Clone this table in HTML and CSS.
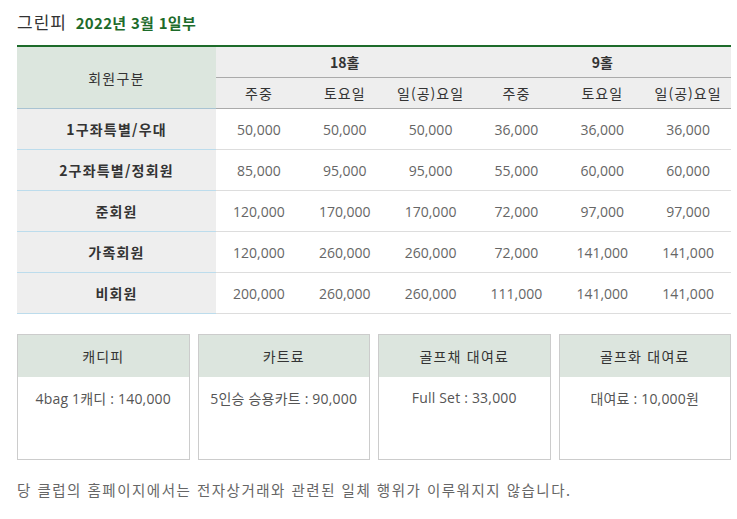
FILE: index.html
```html
<!DOCTYPE html>
<html lang="ko">
<head>
    <meta charset="UTF-8">
    <meta name="viewport" content="width=device-width, initial-scale=1.0">
    <title>그린피</title>
    <link rel="stylesheet" href="styles.css">
</head>
<body>
    <h2 class="title">그린피 <span class="since">2022년 3월 1일부</span></h2>

    <table class="fee">
        <thead>
            <tr>
                <th rowspan="2" class="kind">회원구분</th>
                <th colspan="3" class="group">18홀</th>
                <th colspan="3" class="group">9홀</th>
            </tr>
            <tr class="days">
                <th>주중</th>
                <th>토요일</th>
                <th>일(공)요일</th>
                <th>주중</th>
                <th>토요일</th>
                <th>일(공)요일</th>
            </tr>
        </thead>
        <tbody>
            <tr>
                <th>1구좌특별/우대</th>
                <td>50,000</td><td>50,000</td><td>50,000</td>
                <td>36,000</td><td>36,000</td><td>36,000</td>
            </tr>
            <tr>
                <th>2구좌특별/정회원</th>
                <td>85,000</td><td>95,000</td><td>95,000</td>
                <td>55,000</td><td>60,000</td><td>60,000</td>
            </tr>
            <tr>
                <th>준회원</th>
                <td>120,000</td><td>170,000</td><td>170,000</td>
                <td>72,000</td><td>97,000</td><td>97,000</td>
            </tr>
            <tr>
                <th>가족회원</th>
                <td>120,000</td><td>260,000</td><td>260,000</td>
                <td>72,000</td><td>141,000</td><td>141,000</td>
            </tr>
            <tr>
                <th>비회원</th>
                <td>200,000</td><td>260,000</td><td>260,000</td>
                <td>111,000</td><td>141,000</td><td>141,000</td>
            </tr>
        </tbody>
    </table>

    <div class="extras">
        <div class="box">
            <div class="box-head">캐디피</div>
            <div class="box-body">4bag 1캐디 : 140,000</div>
        </div>
        <div class="box">
            <div class="box-head">카트료</div>
            <div class="box-body">5인승 승용카트 : 90,000</div>
        </div>
        <div class="box">
            <div class="box-head">골프채 대여료</div>
            <div class="box-body">Full Set : 33,000</div>
        </div>
        <div class="box">
            <div class="box-head">골프화 대여료</div>
            <div class="box-body">대여료 : 10,000원</div>
        </div>
    </div>

    <p class="notice">당 클럽의 홈페이지에서는 전자상거래와 관련된 일체 행위가 이루워지지 않습니다.</p>
</body>
</html>
```

FILE: styles.css
```css
body, h2, p, table {
    margin: 0;
    padding: 0;
    box-sizing: border-box;
}

body {
    font-family: "Open Sans", "Noto Sans CJK KR", sans-serif;
    color: #555;
    background-color: #fff;
    padding: 10px 6px 0 17px;
}


.title {
    font-family: "Noto Sans CJK KR", sans-serif;
    font-size: 17px;
    font-weight: normal;
    letter-spacing: 1px;
    color: #333;
    line-height: 24px;
    height: 35px;
}

.since {
    font-size: 15px;
    font-weight: bold;
    letter-spacing: 0.3px;
    margin-left: 3px;
    color: #1d6b2a;
}


.fee {
    width: 714px;
    border-collapse: collapse;
    border-top: 2px solid #1d6b2a;
    table-layout: fixed;
}

.fee th, .fee td {
    text-align: center;
    padding: 0;
}

.fee thead th {
    background-color: #eeeeee;
    font-family: "Noto Sans CJK KR", sans-serif;
    font-size: 14px;
    letter-spacing: 1px;
    color: #333;
    height: 30px;
    border-bottom: 1px solid #aaa;
}

.fee thead .group {
    font-weight: bold;
    letter-spacing: 0;
}

.fee thead .days th {
    font-weight: normal;
}

.fee thead .kind {
    width: 199px;
    background-color: #dce6de;
    font-weight: normal;
    letter-spacing: 1.3px;
    border-bottom: 1px solid #a9c3d2;
}

.fee tbody th {
    background-color: #eeeeee;
    font-family: "Noto Sans CJK KR", sans-serif;
    font-size: 14px;
    font-weight: bold;
    letter-spacing: 1.2px;
    color: #333;
    height: 40px;
    border-bottom: 1px solid #bcdcec;
}

.fee tbody td {
    font-size: 14px;
    color: #666;
    height: 40px;
    border-bottom: 1px solid #ddd;
}


.extras {
    display: flex;
    gap: 8px;
    width: 714px;
    margin-top: 20px;
}

.box {
    flex: 1;
    border: 1px solid #ccc;
    height: 124px;
}

.box-head {
    background-color: #dce5de;
    font-family: "Noto Sans CJK KR", sans-serif;
    font-size: 14px;
    letter-spacing: 1.2px;
    color: #333;
    height: 42px;
    line-height: 42px;
    text-align: center;
}

.box-body {
    font-family: "Open Sans", "Noto Sans CJK KR", sans-serif;
    font-size: 14px;
    letter-spacing: 0.2px;
    color: #555;
    text-align: center;
    padding-top: 11px;
}


.notice {
    font-family: "Noto Sans CJK KR", sans-serif;
    font-size: 14.5px;
    letter-spacing: 1.5px;
    color: #666;
    margin-top: 19px;
}
```
